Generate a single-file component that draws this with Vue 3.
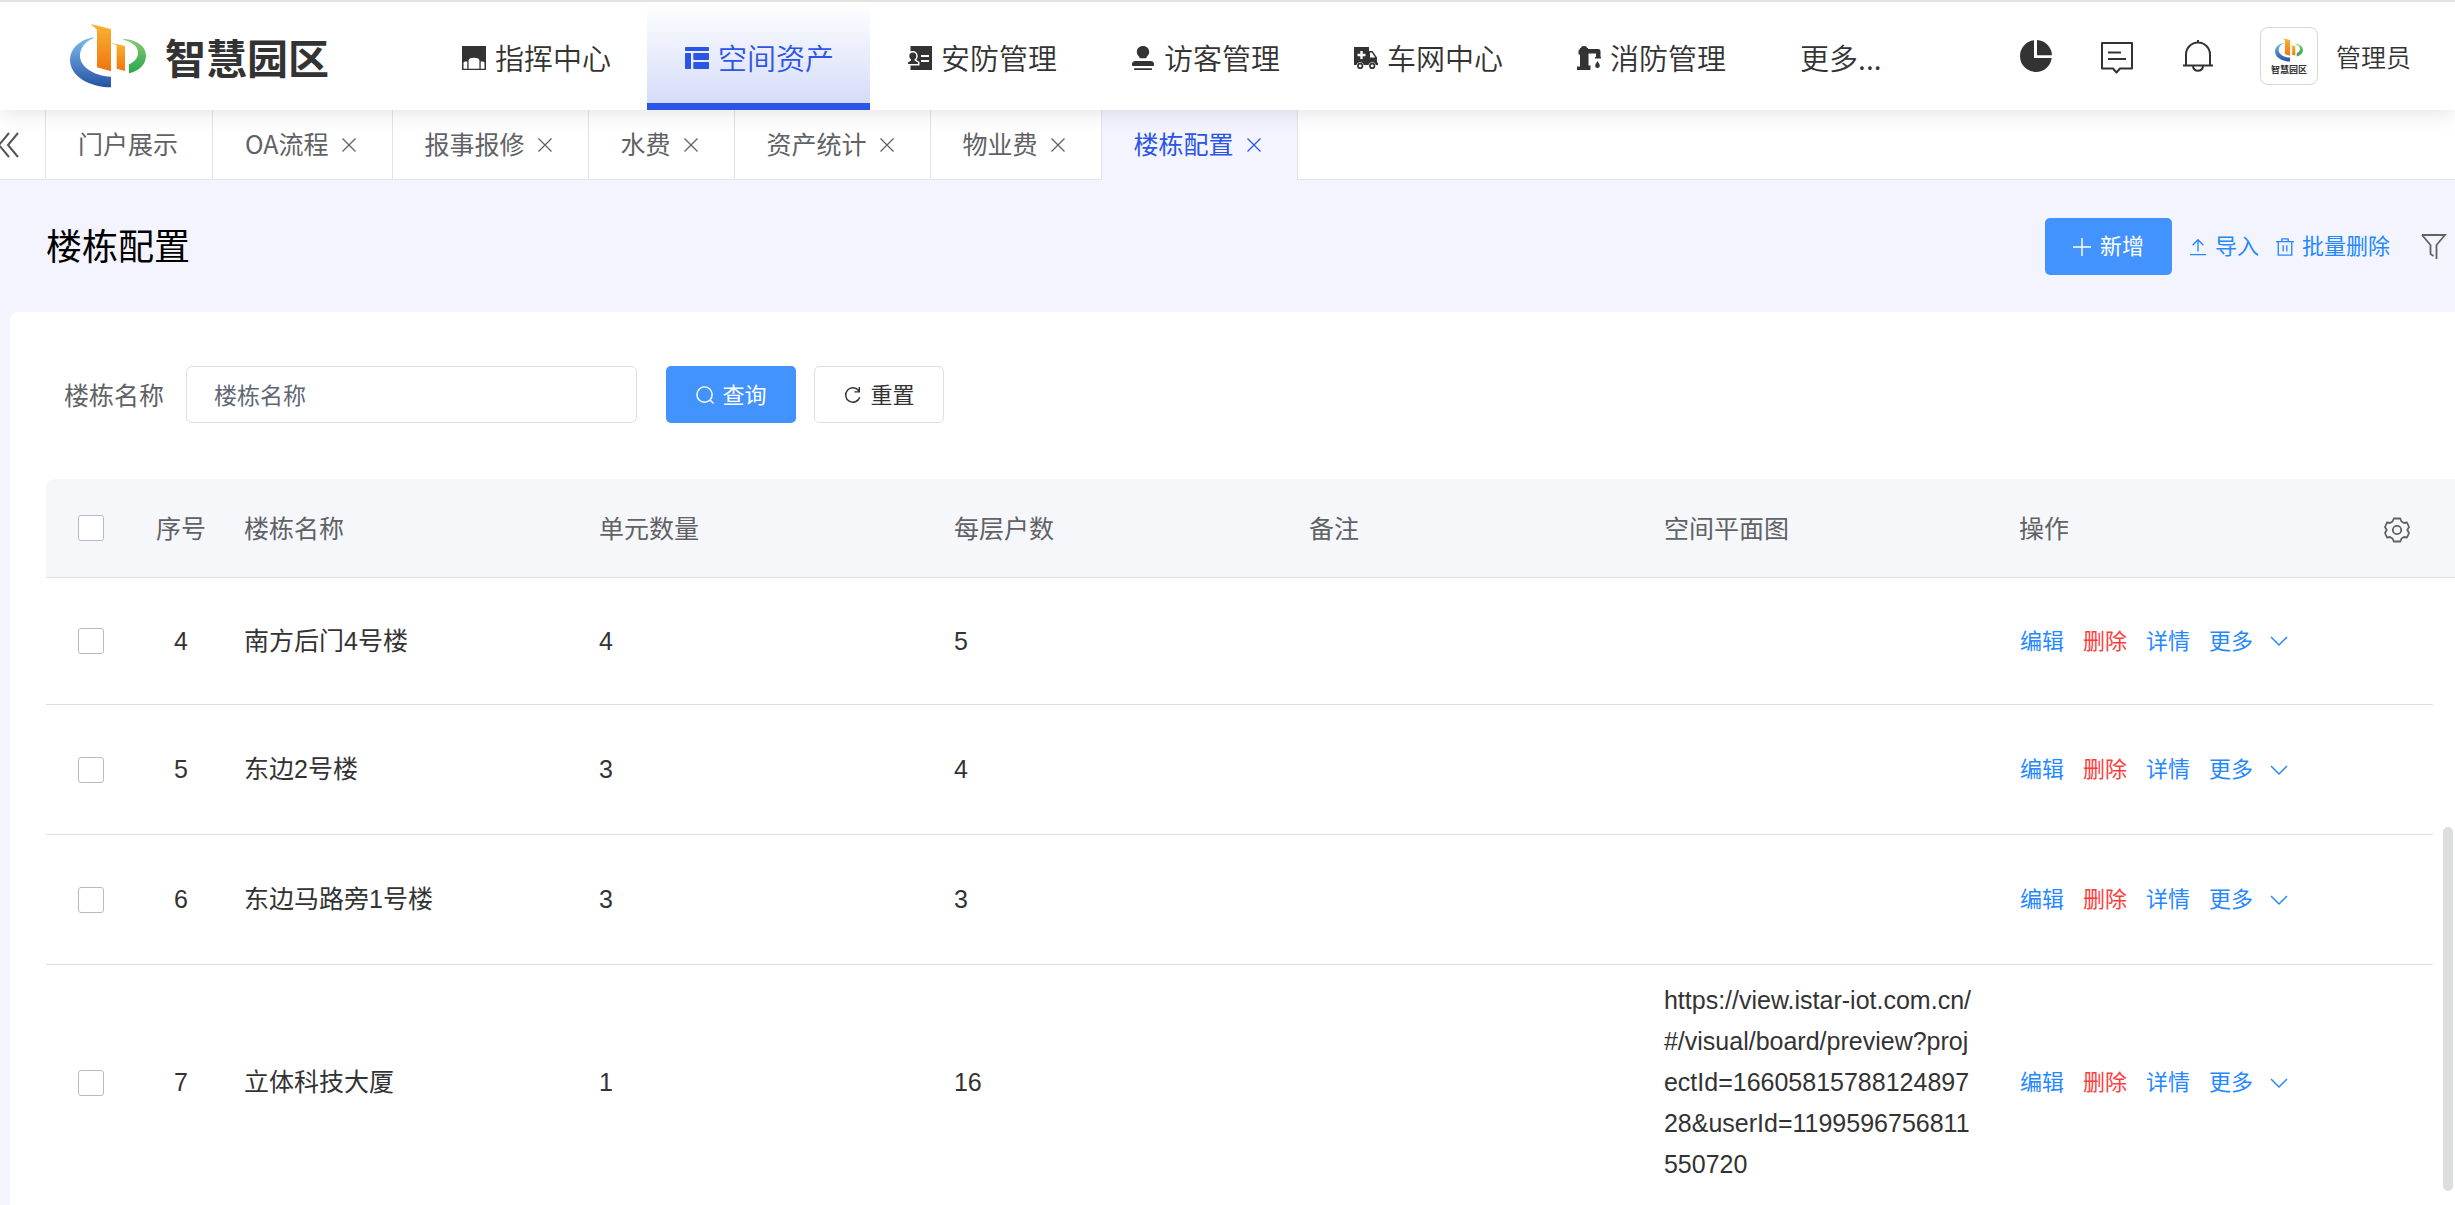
<script setup>
import { ref } from 'vue'

const navItems = [
  { label: '指挥中心', icon: 'gate' },
  { label: '空间资产', icon: 'layout', active: true },
  { label: '安防管理', icon: 'idcard' },
  { label: '访客管理', icon: 'visitor' },
  { label: '车网中心', icon: 'truck' },
  { label: '消防管理', icon: 'hydrant' },
  { label: '更多...' },
]

const tabs = [
  { label: '门户展示' },
  { label: 'OA流程', closable: true },
  { label: '报事报修', closable: true },
  { label: '水费', closable: true },
  { label: '资产统计', closable: true },
  { label: '物业费', closable: true },
  { label: '楼栋配置', closable: true, active: true },
]

const keyword = ref('')

const rows = [
  { no: 4, name: '南方后门4号楼', units: 4, perFloor: 5, plan: '' },
  { no: 5, name: '东边2号楼', units: 3, perFloor: 4, plan: '' },
  { no: 6, name: '东边马路旁1号楼', units: 3, perFloor: 3, plan: '' },
  {
    no: 7,
    name: '立体科技大厦',
    units: 1,
    perFloor: 16,
    plan: 'https://view.istar-iot.com.cn/#/visual/board/preview?projectId=1660581578812489728&userId=1199596756811550720',
  },
]
</script>

<template>
  <div class="page">
    <svg class="defs" width="0" height="0" aria-hidden="true">
      <defs>
        <linearGradient id="g-orange" x1="0" y1="0" x2="0" y2="1">
          <stop offset="0" stop-color="#f8b431" />
          <stop offset="1" stop-color="#f27410" />
        </linearGradient>
        <linearGradient id="g-blue" x1="0" y1="0" x2="0" y2="1">
          <stop offset="0" stop-color="#7fbdec" />
          <stop offset="1" stop-color="#2452a5" />
        </linearGradient>
        <linearGradient id="g-green" x1="0" y1="0" x2="0" y2="1">
          <stop offset="0" stop-color="#8bc873" />
          <stop offset="1" stop-color="#25a84a" />
        </linearGradient>
        <symbol id="brand" viewBox="60 40 228 192">
          <path fill="url(#g-blue)" d="M131 80C86 87 60 116 60 148C60 193 112 229 183 230V198C130 195 90 168 90 135C90 112 107 91 131 83Z" />
          <path fill="url(#g-orange)" d="M122 40L183 55V182L141 170V57Z" />
          <path fill="url(#g-orange)" d="M183 96L225 106V181L200 174V104Z" />
          <path fill="url(#g-green)" d="M220 85C262 87 288 108 288 135C288 160 268 181 237 188V161C255 152 264 141 264 126C264 106 246 94 220 87Z" />
        </symbol>
      </defs>
    </svg>

    <header class="header">
      <a class="logo" href="#">
        <svg class="logo-mark"><use href="#brand" /></svg>
        <span class="logo-text">智慧园区</span>
      </a>
      <nav class="nav">
        <a v-for="item in navItems" :key="item.label" href="#" class="nav-item" :class="{ active: item.active }">
          <svg v-if="item.icon" class="nav-icon" viewBox="0 0 24 24" fill="currentColor">
            <path v-if="item.icon === 'gate'" fill-rule="evenodd" d="M0 0H24V24H0ZM1.500 16.500V22.700H5.300V15.500H2.800ZM6.600 22.700H17.400V14.200C17 12.600 15 11.800 12 11.800S7 12.600 6.600 14.200ZM18.700 15.500V22.700H22.500V16.500L21.200 15.500Z" />
            <g v-else-if="item.icon === 'layout'">
              <rect x="0" y="1" width="24" height="4" rx=".7" />
              <rect x="0" y="7" width="6" height="16" rx=".7" />
              <rect x="8.300" y="7" width="15.700" height="7" rx=".7" />
              <rect x="8.300" y="16" width="15.700" height="7" rx=".7" />
            </g>
            <g v-else-if="item.icon === 'idcard'">
              <path fill-rule="evenodd" d="M2.500 0H24V24H2.500V19.500H11.500V16L8.300 14C10 12 10.200 9 8.800 7C7.300 5 4.800 4.600 2.500 5.500ZM13 9V11H21V9ZM13 14V16H21V14Z" />
              <circle cx="4.800" cy="10" r="3.500" />
              <path d="M3 12H6.600V14.500L10 16.500V18H0V16.500L3 14.500Z" />
            </g>
            <g v-else-if="item.icon === 'visitor'">
              <path d="M12 0C8.300 0 5.800 2.600 5.800 6C5.800 8 7 9.800 8.500 11V12.200H15.500V11C17 9.800 18.200 8 18.200 6C18.200 2.600 15.700 0 12 0Z" />
              <path d="M1 19V18C1 16 2.400 15 4.500 15H19.500C21.600 15 23 16 23 18V19C23 19.800 22.500 20 22 20H2C1.400 20 1 19.800 1 19Z" />
              <rect x="3" y="22.300" width="18" height="1.700" rx=".6" />
            </g>
            <g v-else-if="item.icon === 'truck'">
              <path fill-rule="evenodd" d="M0 1H15V5H18.500L23 11.500V16L24 17V19H21.800A3.800 3.800 0 0 0 14.500 19H9.800A3.800 3.800 0 0 0 2.500 19H0ZM6.300 5V7.800H3.500V10.200H6.300V13H8.700V10.200H11.500V7.800H8.700V5ZM16 6.500V11.500H21.200L17.800 6.500Z" />
              <path fill-rule="evenodd" d="M6.200 16.800A3.100 3.100 0 1 1 6.200 23A3.100 3.100 0 1 1 6.200 16.800ZM6.200 18.500A1.400 1.400 0 1 0 6.200 21.300A1.400 1.400 0 1 0 6.200 18.500ZM18.200 16.800A3.100 3.100 0 1 1 18.200 23A3.100 3.100 0 1 1 18.200 16.800ZM18.200 18.500A1.400 1.400 0 1 0 18.200 21.300A1.400 1.400 0 1 0 18.200 18.500Z" />
            </g>
            <g v-else>
              <path d="M4 2C4 .8 5 0 7 0S10 .8 10 2H11V3H21C22.800 3 23.500 4 23.500 5.500V11H24V12.500H18V11H19V7.500H11.500V19.500H13.500V24H0V20.500H3V8.500H1.500V4.500L3 3V2Z" />
              <path d="M20.500 15C21.800 17 22.800 18.500 22.800 19.800A2.300 2.300 0 0 1 18.200 19.800C18.200 18.500 19.200 17 20.500 15Z" />
            </g>
          </svg>
          <span>{{ item.label }}</span>
        </a>
      </nav>
      <div class="tools">
        <button class="tool" aria-label="统计">
          <svg viewBox="0 0 32 32" fill="#333">
            <path d="M14 .3A15.900 15.900 0 1 0 31.700 18H14Z" />
            <path d="M17 0A16 16 0 0 1 32 15.200H17Z" />
          </svg>
        </button>
        <button class="tool" aria-label="消息">
          <svg viewBox="0 0 32 32" fill="none" stroke="#333" stroke-width="2">
            <path d="M1 3H31V28.500H19L15.500 32.500L12 28.500H1ZM7 12.500H20M7 19H25" stroke-linejoin="round" />
          </svg>
        </button>
        <button class="tool" aria-label="通知">
          <svg viewBox="0 0 32 32" fill="none" stroke="#333" stroke-width="2">
            <path d="M1 25.500H31M4 25V14.500A12 12 0 0 1 28 14.500V25M16 0V3M11 26.500C11.500 29.500 13.500 30.800 16 30.800S20.500 29.500 21 26.500" />
          </svg>
        </button>
        <span class="avatar">
          <svg class="avatar-mark"><use href="#brand" /></svg>
          <span class="avatar-text">智慧园区</span>
        </span>
        <span class="user">管理员</span>
      </div>
    </header>

    <div class="tabs">
      <button class="tabs-prev" aria-label="向左">
        <svg viewBox="0 0 22 26" fill="none" stroke="#555" stroke-width="2">
          <path d="M11 1L1 13L11 25M20 1L10 13L20 25" />
        </svg>
      </button>
      <div v-for="tab in tabs" :key="tab.label" class="tab" :class="{ active: tab.active }">
        <a href="#">{{ tab.label }}</a>
        <button v-if="tab.closable" class="tab-close" aria-label="关闭">
          <svg viewBox="0 0 14 14" stroke="currentColor" stroke-width="1.300">
            <path d="M.5 .5L13.500 13.500M13.500 .5L.5 13.500" />
          </svg>
        </button>
      </div>
    </div>

    <main class="main">
      <div class="title-bar">
        <h1>楼栋配置</h1>
        <div class="actions">
          <button class="btn primary add">
            <svg viewBox="0 0 20 20" fill="none" stroke="currentColor" stroke-width="1.600"><path d="M10 0V20M0 10H20" /></svg>
            新增
          </button>
          <button class="link">
            <svg viewBox="0 0 20 20" fill="none" stroke="currentColor" stroke-width="1.500"><path d="M1 18.500H19M10 15V2M4 8L10 2L16 8" /></svg>
            导入
          </button>
          <button class="link">
            <svg viewBox="0 0 20 20" fill="none" stroke="currentColor" stroke-width="1.500"><path d="M0 4H20M2.500 4V19H17.500V4M6.500 4V1H13.500V4M8 8V15M12 8V15" /></svg>
            批量删除
          </button>
          <button class="filter" aria-label="筛选">
            <svg viewBox="0 0 25 25" fill="none" stroke="#606266" stroke-width="1.800"><path d="M1 1H24L15.500 11V25M1 1L9.500 11V20L12.500 22" /></svg>
          </button>
        </div>
      </div>

      <section class="card">
        <form class="search" @submit.prevent>
          <label for="building-name">楼栋名称</label>
          <input id="building-name" v-model="keyword" type="text" placeholder="楼栋名称" />
          <button type="submit" class="btn primary">
            <svg viewBox="0 0 20 20" fill="none" stroke="currentColor" stroke-width="1.600"><circle cx="9.500" cy="9.500" r="8.500" /><path d="M15.500 15.500L19.500 19.500" /></svg>
            查询
          </button>
          <button type="reset" class="btn plain">
            <svg viewBox="0 0 20 20" fill="none" stroke="currentColor" stroke-width="1.600"><path d="M17.500 12.500A8 8 0 1 1 16.500 5.500M17 1V6.500H11.500" /></svg>
            重置
          </button>
        </form>

        <div class="table-wrap">
          <table class="grid">
            <colgroup>
              <col class="c-narrow" />
              <col class="c-narrow" />
              <col />
              <col />
              <col />
              <col />
              <col />
              <col class="c-ops" />
              <col class="c-gutter" />
            </colgroup>
            <thead>
              <tr>
                <th class="center"><input type="checkbox" aria-label="全选" /></th>
                <th class="center index">序号</th>
                <th>楼栋名称</th>
                <th>单元数量</th>
                <th>每层户数</th>
                <th>备注</th>
                <th>空间平面图</th>
                <th colspan="2">
                  <div class="ops-head">
                    操作
                    <button aria-label="列设置">
                      <svg viewBox="0 0 26 26" fill="none" stroke="#606266" stroke-width="1.800" stroke-linejoin="round">
                        <path d="M9.800 1.500H16.200L17.500 4.500L20 6L23 5.500L25 10L23.300 13L25 16L23 20.500L20 20L17.500 21.500L16.200 24.500H9.800L8.500 21.500L6 20L3 20.500L1 16L2.700 13L1 10L3 5.500L6 6L8.500 4.500Z" />
                        <circle cx="13" cy="13" r="4.200" />
                      </svg>
                    </button>
                  </div>
                </th>
              </tr>
            </thead>
            <tbody>
              <tr v-for="row in rows" :key="row.no">
                <td class="center"><input type="checkbox" :aria-label="'选择 ' + row.name" /></td>
                <td class="center">{{ row.no }}</td>
                <td>{{ row.name }}</td>
                <td>{{ row.units }}</td>
                <td>{{ row.perFloor }}</td>
                <td></td>
                <td class="plan">{{ row.plan }}</td>
                <td>
                  <div class="ops">
                    <button>编辑</button>
                    <button class="danger">删除</button>
                    <button>详情</button>
                    <button class="more">
                      更多
                      <svg viewBox="0 0 18 10" fill="none" stroke="currentColor" stroke-width="1.500"><path d="M1 1L9 9L17 1" /></svg>
                    </button>
                  </div>
                </td>
                <td class="gutter"></td>
              </tr>
            </tbody>
          </table>
        </div>
      </section>
      <div class="scroll-thumb"></div>
    </main>
  </div>
</template>

<style>
html,
body {
  background: #f3f4fd;
}
</style>

<style scoped>
.page {
  display: flex;
  flex-direction: column;
  min-height: 100vh;
  overflow: hidden;
  font-family: "Liberation Sans", "Noto Sans CJK SC", sans-serif;
  font-size: 25px;
  line-height: 41px;
  color: #333;
}
.page *,
.page {
  box-sizing: border-box;
}
.defs {
  position: absolute;
}
button {
  padding: 0;
  border: 0;
  background: none;
  color: inherit;
  font: inherit;
  cursor: pointer;
}
a {
  color: inherit;
  text-decoration: none;
}
svg {
  display: block;
  flex: none;
  overflow: visible;
}

.header {
  position: relative;
  z-index: 2;
  display: flex;
  height: 110px;
  background: #fff;
  border-top: 2px solid #e3e3e3;
  box-shadow: 0 4px 20px rgba(0, 0, 0, 0.1);
  font-family: "Noto Sans CJK SC", sans-serif;
}
.logo {
  display: flex;
  align-items: center;
  gap: 19px;
  width: 354px;
  margin-left: 70px;
}
.logo-mark {
  width: 76px;
  height: 64px;
}
.logo-text {
  font-size: 41px;
  font-weight: 700;
  line-height: 60px;
}
.nav {
  display: flex;
}
.nav-item {
  display: flex;
  align-items: center;
  gap: 9px;
  padding: 10px 36px 0 38px;
  font-size: 29px;
  font-weight: 350;
  white-space: nowrap;
  border-bottom: 7px solid transparent;
}
.nav-item.active {
  color: #2b55e6;
  border-color: #2b55e6;
  background: linear-gradient(#fff, #d5dcf9);
}
.nav-icon {
  width: 24px;
  height: 24px;
}
.tools {
  display: flex;
  align-items: center;
  gap: 49px;
  margin-left: auto;
  padding: 0 44px 0 20px;
}
.tool svg {
  width: 32px;
  height: 32px;
}
.avatar {
  display: flex;
  flex-direction: column;
  align-items: center;
  justify-content: center;
  gap: 3px;
  width: 58px;
  height: 58px;
  border: 1px solid #d6d6d6;
  border-radius: 8px;
}
.tool + .avatar {
  margin-left: -3px;
}
.avatar-mark {
  width: 28px;
  height: 24px;
}
.avatar-text {
  font-size: 9px;
  font-weight: 700;
  line-height: 10px;
}
.user {
  margin-left: -31px;
  font-weight: 350;
}

.tabs {
  display: flex;
  height: 70px;
  background: #fff;
  border-bottom: 1px solid #e4e4e8;
  color: #606266;
  font-family: "Noto Sans CJK SC", sans-serif;
}
.tabs-prev {
  width: 46px;
  border-right: 1px solid #e4e4e8;
}
.tabs-prev svg {
  width: 22px;
  height: 26px;
  margin-left: -2px;
}
.tab {
  display: flex;
  align-items: center;
  gap: 13px;
  height: 70px;
  padding: 0 34px 0 32px;
  border-right: 1px solid #e4e4e8;
  white-space: nowrap;
}
.tab a {
  padding-bottom: 3px;
}
.tab.active {
  background: #f3f4fd;
  color: #2b55e6;
}
.tab-close {
  margin-right: 2px;
}
.tab-close svg {
  width: 14px;
  height: 14px;
}

.main {
  position: relative;
  flex: 1;
  display: flex;
  flex-direction: column;
  padding-left: 10px;
  background: #f3f4fd;
}
.title-bar {
  display: flex;
  align-items: center;
  justify-content: space-between;
  height: 132px;
  padding: 0 9px 0 36px;
}
h1 {
  margin: 0;
  padding-top: 3px;
  color: #000;
  font-size: 36px;
  font-weight: 400;
  line-height: 54px;
}
.actions {
  display: flex;
  align-items: center;
  gap: 17px;
}
.btn,
.link {
  display: flex;
  align-items: center;
  justify-content: center;
  gap: 9px;
  padding-top: 1px;
  font-size: 22px;
}
.btn svg,
.link svg {
  width: 18px;
  height: 18px;
}
.btn {
  width: 130px;
  height: 57px;
  border-radius: 5px;
}
.btn.primary {
  background: #4393ff;
  color: #fff;
}
.btn.plain {
  border: 1px solid #dcdfe6;
  background: #fff;
  color: #333;
}
.btn.add {
  width: 127px;
}
.link,
.ops {
  color: #2688ff;
}
.link {
  gap: 8px;
}
.filter {
  margin-left: 14px;
}
.filter svg {
  width: 25px;
  height: 25px;
}

.card {
  flex: 1;
  background: #fff;
  border-radius: 8px 0 0 0;
}
.search {
  display: flex;
  align-items: center;
  padding: 54px 54px 56px;
}
.search label {
  margin-right: 22px;
  padding-top: 3px;
  color: #606266;
}
.search input {
  width: 451px;
  height: 57px;
  margin-right: 29px;
  padding: 3px 27px 0;
  border: 1px solid #dcdfe6;
  border-radius: 6px;
  color: #333;
  font: inherit;
  font-size: 23px;
}
.search input::placeholder {
  color: #606774;
  opacity: 1;
}
.search .btn + .btn {
  margin-left: 18px;
}

.table-wrap {
  margin-left: 36px;
  overflow: hidden;
  border-radius: 8px 0 0 0;
}
.grid {
  width: 100%;
  table-layout: fixed;
  border-collapse: separate;
  border-spacing: 0;
}
.c-narrow {
  width: 90px;
}
.c-ops {
  width: 432px;
}
.c-gutter {
  width: 22px;
}
th,
td {
  padding: 15px 24px 15px 18px;
  border-bottom: 1px solid #dcdfe6;
  text-align: left;
}
th {
  height: 99px;
  padding-top: 18px;
  background: #f5f7fa;
  color: #606266;
  font-weight: 400;
}
td {
  height: 130px;
}
/* the first visible row is partly scrolled under the head */
tbody tr:first-child td {
  height: 127px;
}
.center {
  padding: 0;
  text-align: center;
}
.center.index {
  padding-top: 3px;
}
.gutter,
tbody tr:last-child td {
  border-bottom: 0;
}
.gutter {
  padding: 0;
}
.plan {
  word-break: break-all;
}
input[type="checkbox"] {
  appearance: none;
  display: block;
  width: 26px;
  height: 26px;
  margin: 0 auto;
  border: 1px solid #b8bbc2;
  border-radius: 3px;
  background: #fff;
}
.ops-head {
  display: flex;
  align-items: center;
  justify-content: space-between;
  padding-right: 21px;
}
.ops-head svg {
  width: 26px;
  height: 26px;
}
.ops {
  display: flex;
  align-items: center;
  gap: 19px;
  padding-left: 1px;
  font-size: 22px;
}
.danger {
  color: #ff3b3b;
}
.more {
  display: flex;
  align-items: center;
  gap: 17px;
}
.more svg {
  width: 18px;
  height: 10px;
}

/* thumb of the page's own scroll bar, laid over the card */
.scroll-thumb {
  position: absolute;
  right: 2px;
  bottom: 14px;
  width: 10px;
  height: 364px;
  border-radius: 5px;
  background: #dddee0;
}
</style>
